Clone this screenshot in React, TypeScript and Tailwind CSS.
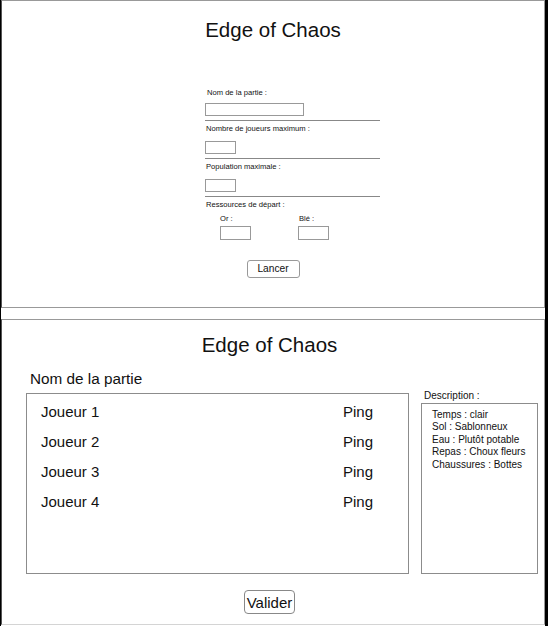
export default function App() {
  const players = ["Joueur 1", "Joueur 2", "Joueur 3", "Joueur 4"];
  const desc = [
    "Temps : clair",
    "Sol : Sablonneux",
    "Eau : Plutôt potable",
    "Repas : Choux fleurs",
    "Chaussures : Bottes",
  ];
  return (
    <div className="w-[548px] h-[626px] bg-white border-l border-l-black border-r-[3px] border-r-black flex flex-col text-[#111] font-['Liberation_Sans',Arial,sans-serif]">
      {/* Panel 1 */}
      <div className="h-[308px] border border-[#999] border-l-[#555] flex flex-col">
        <div className="mt-[17px] h-[24px] leading-[24px] text-center text-[20.5px]">Edge of Chaos</div>
        <div className="ml-[203px] w-[175px] flex flex-col mt-[43px]">
          {/* section 1 */}
          <div className="h-[16px] leading-[16px] text-[7.6px] pl-[2px]">Nom de la partie :</div>
          <div className="mt-[2px] w-[99px] h-[13px] border border-[#999]" />
          <div className="mt-[4px] border-b border-[#888]" />
          {/* section 2 */}
          <div className="h-[16px] leading-[16px] text-[7.6px] pl-[1px]">Nombre de joueurs maximum :</div>
          <div className="mt-[4px] w-[31px] h-[13px] border border-[#999]" />
          <div className="mt-[4px] border-b border-[#888]" />
          {/* section 3 */}
          <div className="h-[16px] leading-[16px] text-[7.6px] pl-[1px]">Population maximale :</div>
          <div className="mt-[4px] w-[31px] h-[13px] border border-[#999]" />
          <div className="mt-[4px] border-b border-[#888]" />
          {/* section 4 */}
          <div className="h-[16px] leading-[16px] text-[7.6px] pl-[1px]">Ressources de départ :</div>
          <div className="flex pl-[15px]">
            <div className="w-[78px] flex flex-col">
              <div className="h-[12px] leading-[12px] text-[7.6px]">Or :</div>
              <div className="mt-[1px] w-[31px] h-[14px] border border-[#999]" />
            </div>
            <div className="w-[78px] flex flex-col">
              <div className="h-[12px] leading-[12px] text-[7.6px] pl-[1px]">Blé :</div>
              <div className="mt-[1px] w-[31px] h-[14px] border border-[#999]" />
            </div>
          </div>
        </div>
        <div className="mt-[20px] flex justify-center">
          <div className="w-[53px] h-[18px] border border-[#999] rounded-[3px] flex items-center justify-center text-[10.2px] leading-none">
            Lancer
          </div>
        </div>
      </div>

      {/* gap */}
      <div className="h-[11px] bg-white" />

      {/* Panel 2 */}
      <div className="h-[306px] border border-[#999] border-l-[#555] border-b-[#d4d4d4] flex flex-col">
        <div className="mt-[13px] h-[24px] leading-[24px] text-center text-[20.5px] pr-[7px]">Edge of Chaos</div>
        <div className="mt-[12px] flex items-end pl-[24px]">
          <div className="w-[383px] flex flex-col">
            <div className="h-[20px] leading-[20px] pl-[4px] text-[15.3px]">Nom de la partie</div>
            <div className="mt-[4px] h-[181px] border border-[#8c8c8c] pt-[3px] pl-[14px] flex flex-col">
              {players.map((p) => (
                <div key={p} className="h-[30px] flex items-center text-[15px]">
                  <span className="w-[302px]">{p}</span>
                  <span>Ping</span>
                </div>
              ))}
            </div>
          </div>
          <div className="ml-[12px] w-[117px] flex flex-col">
            <div className="h-[12px] leading-[12px] text-[10px] pl-[3px]">Description :</div>
            <div className="mt-[1px] h-[171px] border border-[#8c8c8c] pt-[4.5px] pl-[10px] flex flex-col">
              {desc.map((d) => (
                <div key={d} className="h-[12.5px] leading-[12.5px] text-[10px] whitespace-nowrap">{d}</div>
              ))}
            </div>
          </div>
        </div>
        <div className="mt-[16px] flex justify-center pr-[7px]">
          <div className="w-[51px] h-[24px] border border-[#888] rounded-[4px] flex items-center justify-center text-[15px] leading-none">
            Valider
          </div>
        </div>
      </div>
    </div>
  );
}
